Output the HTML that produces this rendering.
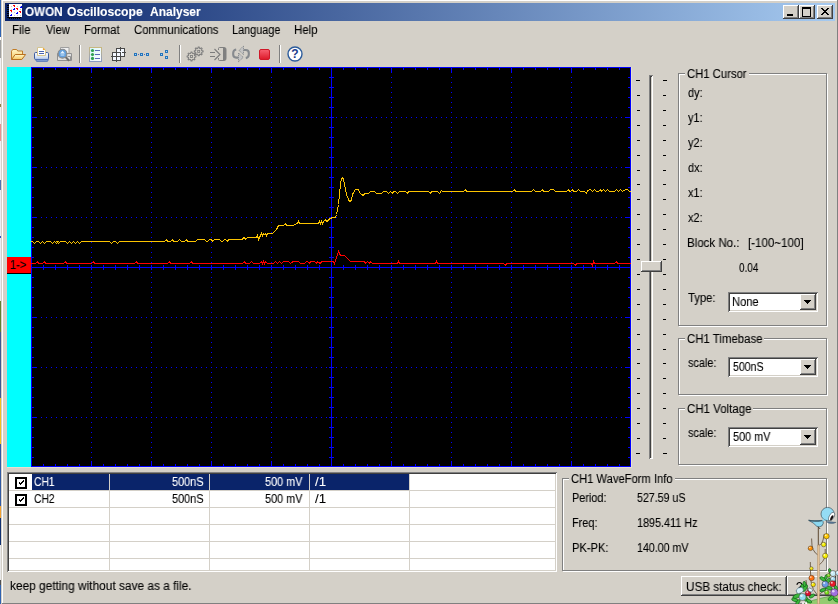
<!DOCTYPE html>
<html><head><meta charset="utf-8"><title>OWON Oscilloscope Analyser</title>
<style>
html,body{margin:0;padding:0;}
body{width:838px;height:604px;overflow:hidden;background:#d4d0c8;position:relative;font-family:"Liberation Sans",sans-serif;font-size:12px;color:#000;}
.a{position:absolute;}
.t{position:absolute;white-space:pre;line-height:14px;height:14px;transform-origin:0 0;will-change:transform;-webkit-text-stroke:0.1px currentColor;}
.gb{position:absolute;border:1px solid #808080;box-shadow:1px 1px 0 #fff, inset 1px 1px 0 #fff;}
.gl{position:absolute;background:#d4d0c8;white-space:nowrap;line-height:14px;height:14px;padding:0 1px;letter-spacing:-0.2px;}
.btn{position:absolute;background:#d4d0c8;box-shadow:inset -1px -1px 0 #404040, inset 1px 1px 0 #fff, inset -2px -2px 0 #808080, inset 2px 2px 0 #d4d0c8;}
.sunk{position:absolute;background:#fff;box-shadow:inset 1px 1px 0 #808080, inset -1px -1px 0 #fff, inset 2px 2px 0 #404040, inset -2px -2px 0 #d4d0c8;}
.sep{position:absolute;width:1px;height:18px;top:45px;background:#808080;box-shadow:1px 0 0 #fff;}
svg{position:absolute;overflow:visible;}
</style></head><body>
<div class="a" style="left:0;top:0;width:1px;height:604px;background:linear-gradient(180deg,#2f62b0 0px,#2f62b0 37px,#ffffff 37px,#ffffff 40px,#a0a0a0 40px,#a0a0a0 58px,#f0f0f4 58px,#f0f0f4 104px,#908040 104px,#908040 107px,#f0f0f4 107px,#f0f0f4 124px,#e89090 124px,#e89090 141px,#f0f0f4 141px,#f0f0f4 180px,#5070b0 180px,#5070b0 190px,#e8ecf4 190px,#e8ecf4 236px,#3050c0 236px,#3050c0 238px,#e8ecf4 238px,#e8ecf4 301px,#608030 301px,#608030 332px,#405890 332px,#405890 398px,#f0c020 398px,#f0c020 444px,#3058a0 444px,#3058a0 506px,#f0a030 506px,#f0a030 518px,#103070 518px,#103070 545px,#e8e8e8 545px,#e8e8e8 580px,#505050 580px,#505050 585px,#2f62b0 585px,#2f62b0 604px)"></div><div class="a" style="left:2px;top:0;width:835px;height:1px;background:#fff"></div><div class="a" style="left:2px;top:0;width:1px;height:603px;background:#fff"></div><div class="a" style="left:837px;top:0;width:1px;height:604px;background:#808080"></div><div class="a" style="left:2px;top:603px;width:836px;height:1px;background:#808080"></div><div class="a" style="left:5px;top:3px;width:830px;height:18px;background:linear-gradient(90deg,#0a246a,#a6caf0)"></div><svg style="left:7px;top:4px" width="16" height="15" viewBox="0 0 16 15" shape-rendering="crispEdges"><rect x="2" y="0" width="13" height="13" fill="#fff"/><g fill="#c4c8cc"><rect x="4" y="2" width="1" height="1"/><rect x="4" y="5" width="1" height="1"/><rect x="4" y="8" width="1" height="1"/><rect x="4" y="11" width="1" height="1"/><rect x="7" y="2" width="1" height="1"/><rect x="7" y="5" width="1" height="1"/><rect x="7" y="8" width="1" height="1"/><rect x="7" y="11" width="1" height="1"/><rect x="10" y="2" width="1" height="1"/><rect x="10" y="5" width="1" height="1"/><rect x="10" y="8" width="1" height="1"/><rect x="10" y="11" width="1" height="1"/><rect x="13" y="2" width="1" height="1"/><rect x="13" y="5" width="1" height="1"/><rect x="13" y="8" width="1" height="1"/><rect x="13" y="11" width="1" height="1"/></g><g fill="#f00"><rect x="6" y="1" width="2" height="1"/><rect x="7" y="2" width="1" height="1"/><rect x="9" y="4" width="2" height="1"/><rect x="10" y="5" width="1" height="1"/><rect x="3" y="6" width="2" height="1"/><rect x="4" y="7" width="1" height="1"/><rect x="12" y="7" width="2" height="1"/><rect x="13" y="8" width="1" height="1"/></g><g fill="#00f"><rect x="13" y="3" width="2" height="1"/><rect x="14" y="2" width="1" height="1"/><rect x="6" y="5" width="2" height="1"/><rect x="7" y="4" width="1" height="1"/><rect x="9" y="9" width="2" height="1"/><rect x="10" y="8" width="1" height="1"/><rect x="3" y="11" width="2" height="1"/><rect x="4" y="10" width="1" height="1"/></g><g fill="#000"><rect x="0" y="1" width="2" height="1"/><rect x="0" y="3" width="2" height="1"/><rect x="0" y="5" width="2" height="1"/><rect x="0" y="7" width="2" height="1"/><rect x="0" y="9" width="2" height="1"/><rect x="0" y="11" width="2" height="1"/><rect x="0" y="13" width="2" height="1"/><rect x="2" y="13" width="1" height="2"/><rect x="4" y="13" width="1" height="2"/><rect x="6" y="13" width="1" height="2"/><rect x="8" y="13" width="1" height="2"/><rect x="10" y="13" width="1" height="2"/><rect x="12" y="13" width="1" height="2"/><rect x="2" y="13" width="12" height="1"/></g></svg><div class="btn" style="left:783px;top:5px;width:16px;height:14px"><div class="a" style="left:4px;top:9px;width:6px;height:2px;background:#000"></div></div><div class="btn" style="left:799px;top:5px;width:16px;height:14px"><div class="a" style="left:3px;top:2px;width:7px;height:7px;border:1px solid #000;border-top-width:2px"></div></div><div class="btn" style="left:817px;top:5px;width:16px;height:14px"><svg style="left:4px;top:3px" width="8" height="7" viewBox="0 0 8 7" shape-rendering="crispEdges"><path d="M0 0h2v1h1v1h2v-1h1v-1h2v1h-1v1h-1v1h-1v1h1v1h1v1h1v1h-2v-1h-1v-1h-2v1h-1v1h-2v-1h1v-1h1v-1h1v-1h-1v-1h-1v-1h-1z" fill="#000"/></svg></div><div class="sep" style="left:79px"></div>
<div class="sep" style="left:179px"></div>
<div class="sep" style="left:279px"></div>
<svg style="left:10px;top:46px" width="18" height="16" viewBox="0 0 18 16">
<defs><linearGradient id="fg" x1="0" y1="0" x2="0" y2="1"><stop offset="0" stop-color="#fff6c8"/><stop offset="1" stop-color="#f6c860"/></linearGradient></defs>
<path d="M1.5 13.5V5.2l1.2-1.7h4l1 1.5h4.8v3.5" fill="url(#fg)" stroke="#c07c28" stroke-width="1" stroke-linejoin="round"/>
<path d="M1.6 13.5L5.2 8.5h10.4l-3.8 5z" fill="url(#fg)" stroke="#b87020" stroke-width="1" stroke-linejoin="round"/>
</svg>
<svg style="left:33px;top:46px" width="18" height="17" viewBox="0 0 18 17">
<defs><linearGradient id="pg" x1="0" y1="0" x2="0" y2="1"><stop offset="0" stop-color="#fafcff"/><stop offset="0.65" stop-color="#d4e0f4"/><stop offset="1" stop-color="#a4bce4"/></linearGradient></defs>
<path d="M1.5 7.7q0-1.2 1.2-1.2h11.6q1.2 0 1.2 1.2v4.6q0 1.2-1.2 1.2h-11.6q-1.2 0-1.2-1.2z" fill="url(#pg)" stroke="#3c5ca0" stroke-width="1"/>
<path d="M2.6 13.5h12.8l-0.9 1.8h-11z" fill="#88a4d8" stroke="#4a6cb4" stroke-width="0.9"/>
<path d="M4.5 9.5v-8h5.3l2.7 2.5v5.5z" fill="#fff" stroke="#d4c490" stroke-width="1"/>
<path d="M9.9 1.6l2.5 2.3h-2.5z" fill="#f0a830"/>
<path d="M6 5.5h5M6 7.5h5" stroke="#4864b0" stroke-width="1"/>
</svg>
<svg style="left:56px;top:46px" width="18" height="17" viewBox="0 0 18 17">
<path d="M4.5 7v-5.5h8.5v6" fill="#f0f0f0" stroke="#a0a0a0" stroke-width="1"/>
<path d="M1.5 7.5h14v7h-14z" fill="#e0e0e0" stroke="#909090" stroke-width="1"/>
<path d="M11.5 10.5h3v3.5" fill="none" stroke="#909090"/>
<circle cx="6.5" cy="7.7" r="4.4" fill="#64a0dc" stroke="#888" stroke-width="1.1"/>
<path d="M6.5 4.8l2.4 2.6h-4.8z" fill="#e8f4ff"/><path d="M4.6 9h3.8" stroke="#d0e8ff" stroke-width="1"/>
<path d="M9.6 11l3.6 3.8" stroke="#707070" stroke-width="2"/>
</svg>
<svg style="left:89px;top:47px" width="13" height="15" viewBox="0 0 13 15">
<defs><linearGradient id="lb" x1="0" y1="0" x2="0" y2="1"><stop offset="0" stop-color="#c8b880"/><stop offset="1" stop-color="#8c9cc4"/></linearGradient>
<linearGradient id="lf" x1="0" y1="0" x2="1" y2="1"><stop offset="0" stop-color="#d8f4fc"/><stop offset="1" stop-color="#fff"/></linearGradient></defs>
<rect x="0.5" y="0.5" width="12" height="14" fill="url(#lf)" stroke="url(#lb)"/>
<g fill="#30a050"><circle cx="3.5" cy="3.5" r="1.6"/><circle cx="3.5" cy="7.5" r="1.6"/><circle cx="3.5" cy="11.4" r="1.6"/></g>
<g stroke="#5868b8" stroke-width="1"><path d="M6 3.5h5M6 7.5h5M6 11.5h5"/></g>
</svg>
<svg style="left:111px;top:47px" width="16" height="16" viewBox="0 0 16 16" shape-rendering="crispEdges">
<rect x="5.5" y="1.5" width="8" height="8" fill="#f4f8ff" stroke="#484848"/>
<rect x="1.5" y="5.5" width="8" height="8" fill="#f4f8ff" stroke="#484848"/>
<path d="M5.5 4v11M0 9.5h11M9.5 0v4M11 5.5h4" stroke="#484848" fill="none"/>
</svg>
<svg style="left:134px;top:50px" width="16" height="10" viewBox="0 0 16 10" shape-rendering="crispEdges"><rect x="0" y="3" width="3" height="3" fill="#2474bc"/><rect x="1" y="4" width="1" height="1" fill="#a8d4f4"/><rect x="6" y="3" width="3" height="3" fill="#2474bc"/><rect x="7" y="4" width="1" height="1" fill="#a8d4f4"/><rect x="12" y="3" width="3" height="3" fill="#2474bc"/><rect x="13" y="4" width="1" height="1" fill="#a8d4f4"/><rect x="4" y="4" width="1" height="1" fill="#4868c0"/><rect x="10" y="4" width="1" height="1" fill="#4868c0"/></svg>
<svg style="left:160px;top:50px" width="8" height="10" viewBox="0 0 8 10" shape-rendering="crispEdges"><rect x="0" y="3" width="3" height="3" fill="#2474bc"/><rect x="1" y="4" width="1" height="1" fill="#a8d4f4"/><rect x="5" y="0" width="3" height="3" fill="#2474bc"/><rect x="6" y="1" width="1" height="1" fill="#a8d4f4"/><rect x="5" y="6" width="3" height="3" fill="#2474bc"/><rect x="6" y="7" width="1" height="1" fill="#a8d4f4"/></svg>
<svg style="left:186px;top:46px" width="18" height="17" viewBox="0 0 18 17"><polygon points="9.88,10.07 9.88,10.93 8.56,11.43 8.32,12.01 8.90,13.29 8.29,13.90 7.01,13.32 6.43,13.56 5.93,14.88 5.07,14.88 4.57,13.56 3.99,13.32 2.71,13.90 2.10,13.29 2.68,12.01 2.44,11.43 1.12,10.93 1.12,10.07 2.44,9.57 2.68,8.99 2.10,7.71 2.71,7.10 3.99,7.68 4.57,7.44 5.07,6.12 5.93,6.12 6.43,7.44 7.01,7.68 8.29,7.10 8.90,7.71 8.32,8.99 8.56,9.57" fill="none" stroke="#808080" stroke-width="1.1"/><rect x="4.5" y="9.5" width="2" height="2" fill="none" stroke="#808080" stroke-width="0.9"/><polygon points="17.08,4.97 17.08,5.83 15.76,6.33 15.52,6.91 16.10,8.19 15.49,8.80 14.21,8.22 13.63,8.46 13.13,9.78 12.27,9.78 11.77,8.46 11.19,8.22 9.91,8.80 9.30,8.19 9.88,6.91 9.64,6.33 8.32,5.83 8.32,4.97 9.64,4.47 9.88,3.89 9.30,2.61 9.91,2.00 11.19,2.58 11.77,2.34 12.27,1.02 13.13,1.02 13.63,2.34 14.21,2.58 15.49,2.00 16.10,2.61 15.52,3.89 15.76,4.47" fill="none" stroke="#808080" stroke-width="1.1"/><rect x="11.7" y="4.4" width="2" height="2" fill="none" stroke="#808080" stroke-width="0.9"/></svg>
<svg style="left:209px;top:46px" width="19" height="16" viewBox="0 0 19 16">
<path d="M1 6.5h5M1 10.5h5M5.5 3l5.5 5.5l-5.5 5.5" fill="none" stroke="#7c7c7c" stroke-width="1.1"/>
<path d="M9.5 4v-1.5q0-1 1-1h5q1.5 0 1.5 2v9q0 2-1.5 2h-5q-1 0-1-1v-1.5" fill="none" stroke="#808080" stroke-width="1"/>
<path d="M14 1.5h1.5q1.5 0 1.5 2v9q0 2-1.5 2h-1.5z" fill="#808080"/>
</svg>
<svg style="left:228px;top:42px" width="28" height="24" viewBox="228 42 28 24">
<path d="M243.5 50h2.3q3 0 3 3v1.5q0 3-3 3.6" fill="none" stroke="#868a8e" stroke-width="2.1"/>
<path d="M238.5 57.6h-2.3q-3 0-3-3v-1.5q0-3 3-3.6" fill="none" stroke="#868a8e" stroke-width="2.1"/>
<path d="M239 50.4l4.5-4.4v8.6z" fill="#c4c4c4" stroke="#808488" stroke-width="0.9" stroke-dasharray="1.2 0.8"/>
<path d="M243.2 57.4l-4.7 4.4v-8.8z" fill="#c4c4c4" stroke="#808488" stroke-width="0.9" stroke-dasharray="1.2 0.8"/>
</svg>
<svg style="left:259px;top:49px" width="11" height="11" viewBox="0 0 11 11">
<defs><linearGradient id="sg" x1="0" y1="0" x2="0" y2="1"><stop offset="0" stop-color="#f86070"/><stop offset="1" stop-color="#dc1828"/></linearGradient></defs>
<rect x="0.5" y="0.5" width="10" height="10" rx="1.5" fill="url(#sg)" stroke="#d01828"/></svg>
<svg style="left:287px;top:46px" width="16" height="16" viewBox="0 0 16 16">
<circle cx="8" cy="8" r="7" fill="#fff" stroke="#2c5c9c" stroke-width="1.4"/>
<text x="8" y="12.2" text-anchor="middle" font-family="Liberation Sans, sans-serif" font-weight="bold" font-size="12" fill="#1c3c8c">?</text></svg><div class="a" style="left:7px;top:467px;width:625px;height:1px;background:#e6e0d0"></div><div class="a" style="left:631px;top:67px;width:1px;height:400px;background:#e6e0d0"></div>
<div class="a" style="left:7px;top:67px;width:24px;height:400px;background:#00ffff"></div>
<div class="a" style="left:7px;top:257px;width:24px;height:16px;background:#ff0000"></div>
<div class="a" style="left:7px;top:273px;width:24px;height:1px;background:#000"></div>
<svg style="left:31px;top:67px" width="600" height="400" viewBox="0 0 600 400" shape-rendering="crispEdges"><defs><pattern id="dh" width="5" height="1" patternUnits="userSpaceOnUse"><rect width="1" height="1" fill="#00f"/></pattern><pattern id="dv" width="1" height="5" patternUnits="userSpaceOnUse"><rect width="1" height="1" fill="#00f"/></pattern></defs><rect width="600" height="400" fill="#000"/><rect x="0" y="50" width="600" height="1" fill="url(#dh)"/><rect x="0" y="100" width="600" height="1" fill="url(#dh)"/><rect x="0" y="150" width="600" height="1" fill="url(#dh)"/><rect x="0" y="250" width="600" height="1" fill="url(#dh)"/><rect x="0" y="300" width="600" height="1" fill="url(#dh)"/><rect x="0" y="350" width="600" height="1" fill="url(#dh)"/><rect x="60" y="0" width="1" height="400" fill="url(#dv)"/><rect x="120" y="0" width="1" height="400" fill="url(#dv)"/><rect x="180" y="0" width="1" height="400" fill="url(#dv)"/><rect x="240" y="0" width="1" height="400" fill="url(#dv)"/><rect x="360" y="0" width="1" height="400" fill="url(#dv)"/><rect x="420" y="0" width="1" height="400" fill="url(#dv)"/><rect x="480" y="0" width="1" height="400" fill="url(#dv)"/><rect x="540" y="0" width="1" height="400" fill="url(#dv)"/><path d="M0.5 0.5h599v399h-599z" fill="none" stroke="#00f"/><path d="M1 10.5h2M597 10.5h2M1 20.5h2M597 20.5h2M1 30.5h2M597 30.5h2M1 40.5h2M597 40.5h2M1 50.5h5M594 50.5h5M1 60.5h2M597 60.5h2M1 70.5h2M597 70.5h2M1 80.5h2M597 80.5h2M1 90.5h2M597 90.5h2M1 100.5h5M594 100.5h5M1 110.5h2M597 110.5h2M1 120.5h2M597 120.5h2M1 130.5h2M597 130.5h2M1 140.5h2M597 140.5h2M1 150.5h5M594 150.5h5M1 160.5h2M597 160.5h2M1 170.5h2M597 170.5h2M1 180.5h2M597 180.5h2M1 190.5h2M597 190.5h2M1 200.5h5M594 200.5h5M1 210.5h2M597 210.5h2M1 220.5h2M597 220.5h2M1 230.5h2M597 230.5h2M1 240.5h2M597 240.5h2M1 250.5h5M594 250.5h5M1 260.5h2M597 260.5h2M1 270.5h2M597 270.5h2M1 280.5h2M597 280.5h2M1 290.5h2M597 290.5h2M1 300.5h5M594 300.5h5M1 310.5h2M597 310.5h2M1 320.5h2M597 320.5h2M1 330.5h2M597 330.5h2M1 340.5h2M597 340.5h2M1 350.5h5M594 350.5h5M1 360.5h2M597 360.5h2M1 370.5h2M597 370.5h2M1 380.5h2M597 380.5h2M1 390.5h2M597 390.5h2M12.5 1v2M12.5 397v2M24.5 1v2M24.5 397v2M36.5 1v2M36.5 397v2M48.5 1v2M48.5 397v2M60.5 1v5M60.5 394v5M72.5 1v2M72.5 397v2M84.5 1v2M84.5 397v2M96.5 1v2M96.5 397v2M108.5 1v2M108.5 397v2M120.5 1v5M120.5 394v5M132.5 1v2M132.5 397v2M144.5 1v2M144.5 397v2M156.5 1v2M156.5 397v2M168.5 1v2M168.5 397v2M180.5 1v5M180.5 394v5M192.5 1v2M192.5 397v2M204.5 1v2M204.5 397v2M216.5 1v2M216.5 397v2M228.5 1v2M228.5 397v2M240.5 1v5M240.5 394v5M252.5 1v2M252.5 397v2M264.5 1v2M264.5 397v2M276.5 1v2M276.5 397v2M288.5 1v2M288.5 397v2M300.5 1v5M300.5 394v5M312.5 1v2M312.5 397v2M324.5 1v2M324.5 397v2M336.5 1v2M336.5 397v2M348.5 1v2M348.5 397v2M360.5 1v5M360.5 394v5M372.5 1v2M372.5 397v2M384.5 1v2M384.5 397v2M396.5 1v2M396.5 397v2M408.5 1v2M408.5 397v2M420.5 1v5M420.5 394v5M432.5 1v2M432.5 397v2M444.5 1v2M444.5 397v2M456.5 1v2M456.5 397v2M468.5 1v2M468.5 397v2M480.5 1v5M480.5 394v5M492.5 1v2M492.5 397v2M504.5 1v2M504.5 397v2M516.5 1v2M516.5 397v2M528.5 1v2M528.5 397v2M540.5 1v5M540.5 394v5M552.5 1v2M552.5 397v2M564.5 1v2M564.5 397v2M576.5 1v2M576.5 397v2M588.5 1v2M588.5 397v2M0 200.5h600M300.5 0v400M298 10.5h5M298 20.5h5M298 30.5h5M298 40.5h5M298 50.5h5M298 60.5h5M298 70.5h5M298 80.5h5M298 90.5h5M298 100.5h5M298 110.5h5M298 120.5h5M298 130.5h5M298 140.5h5M298 150.5h5M298 160.5h5M298 170.5h5M298 180.5h5M298 190.5h5M298 200.5h5M298 210.5h5M298 220.5h5M298 230.5h5M298 240.5h5M298 250.5h5M298 260.5h5M298 270.5h5M298 280.5h5M298 290.5h5M298 300.5h5M298 310.5h5M298 320.5h5M298 330.5h5M298 340.5h5M298 350.5h5M298 360.5h5M298 370.5h5M298 380.5h5M298 390.5h5M12.5 198v5M24.5 198v5M36.5 198v5M48.5 198v5M60.5 198v5M72.5 198v5M84.5 198v5M96.5 198v5M108.5 198v5M120.5 198v5M132.5 198v5M144.5 198v5M156.5 198v5M168.5 198v5M180.5 198v5M192.5 198v5M204.5 198v5M216.5 198v5M228.5 198v5M240.5 198v5M252.5 198v5M264.5 198v5M276.5 198v5M288.5 198v5M300.5 198v5M312.5 198v5M324.5 198v5M336.5 198v5M348.5 198v5M360.5 198v5M372.5 198v5M384.5 198v5M396.5 198v5M408.5 198v5M420.5 198v5M432.5 198v5M444.5 198v5M456.5 198v5M468.5 198v5M480.5 198v5M492.5 198v5M504.5 198v5M516.5 198v5M528.5 198v5M540.5 198v5M552.5 198v5M564.5 198v5M576.5 198v5M588.5 198v5" stroke="#00f" fill="none"/><polyline points="0.5,174.5 1.5,174.5 3.5,176.5 5.5,174.5 7.5,174.5 9.5,176.5 11.5,174.5 11.5,174.5 13.5,176.5 15.5,174.5 19.5,174.5 21.5,176.5 23.5,174.5 23.5,174.5 25.5,176.5 27.5,174.5 25.5,174.5 27.5,176.5 29.5,174.5 34.5,174.5 36.5,176.5 38.5,174.5 38.5,174.5 40.5,176.5 42.5,174.5 42.5,174.5 44.5,176.5 46.5,174.5 46.5,174.5 48.5,176.5 50.5,174.5 78.5,174.5 80.5,176.5 82.5,174.5 84.5,174.5 86.5,176.5 88.5,174.5 133.5,174.5 135.5,172.5 136.5,174.5 139.5,174.5 141.5,172.5 142.5,174.5 146.5,174.5 148.5,172.5 150.5,174.5 153.5,174.5 155.5,172.5 156.5,174.5 164.5,174.5 166.5,172.5 173.5,172.5 175.5,174.5 176.5,174.5 178.5,172.5 180.5,172.5 181.5,174.5 183.5,172.5 188.5,172.5 190.5,174.5 191.5,174.5 193.5,172.5 194.5,172.5 196.5,174.5 197.5,172.5 211.5,172.5 212.5,170.5 213.5,170.5 214.5,172.5 216.5,170.5 225.5,170.5 226.5,168.5 227.5,172.5 229.5,168.5 230.5,166.5 231.5,168.5 232.5,166.5 233.5,167.5 234.5,166.5 235.5,168.5 236.5,166.5 241.5,166.5 243.5,164.5 244.5,163.5 245.5,162.5 247.5,158.5 252.5,158.5 254.5,156.5 255.5,158.5 262.5,158.5 265.5,156.5 266.5,156.5 267.5,154.5 268.5,156.5 287.5,156.5 288.5,154.5 289.5,156.5 290.5,154.5 291.5,156.5 292.5,154.5 294.5,152.5 295.5,154.5 296.5,154.5 297.5,152.5 299.5,151.5 301.5,150.5 304.5,150.5 305.5,147.5 306.5,143.5 307.5,137.5 308.5,127.5 309.5,117.5 310.5,111.5 311.5,110.5 312.5,112.5 313.5,117.5 314.5,122.5 315.5,127.5 317.5,132.5 318.5,134.5 319.5,134.5 320.5,132.5 321.5,127.5 322.5,125.5 324.5,122.5 327.5,122.5 328.5,125.5 330.5,127.5 332.5,128.5 333.5,126.5 337.5,126.5 339.5,124.5 343.5,124.5 345.5,126.5 350.5,126.5 352.5,124.5 355.5,124.5 357.5,126.5 359.5,124.5 361.5,126.5 362.5,124.5 364.5,124.5 366.5,126.5 368.5,124.5 374.5,124.5 376.5,126.5 377.5,124.5 397.5,124.5 399.5,126.5 400.5,124.5 406.5,124.5 408.5,126.5 410.5,123.5 411.5,124.5 432.5,124.5 434.5,122.5 435.5,124.5 481.5,124.5 483.5,122.5 484.5,124.5 500.5,124.5 502.5,122.5 504.5,124.5 509.5,124.5 511.5,122.5 512.5,124.5 517.5,124.5 519.5,122.5 522.5,122.5 524.5,124.5 535.5,124.5 537.5,122.5 538.5,124.5 539.5,124.5 541.5,122.5 542.5,124.5 545.5,124.5 547.5,122.5 549.5,124.5 553.5,124.5 555.5,126.5 556.5,123.5 559.5,122.5 561.5,124.5 563.5,122.5 565.5,124.5 567.5,124.5 569.5,122.5 570.5,124.5 572.5,122.5 574.5,124.5 576.5,122.5 578.5,124.5 583.5,124.5 585.5,122.5 587.5,124.5 589.5,122.5 591.5,124.5 594.5,122.5 596.5,122.5 598.5,124.5 599.5,124.5" fill="none" stroke="#fcc400" stroke-width="1" stroke-linecap="square" shape-rendering="crispEdges"/><polyline points="0.5,196.5 4.5,196.5 6.5,194.5 7.5,196.5 11.5,196.5 13.5,194.5 14.5,196.5 32.5,196.5 34.5,194.5 35.5,196.5 60.5,196.5 62.5,194.5 63.5,196.5 103.5,196.5 105.5,194.5 106.5,196.5 136.5,196.5 138.5,194.5 139.5,196.5 158.5,196.5 160.5,194.5 161.5,196.5 211.5,196.5 213.5,194.5 214.5,196.5 218.5,196.5 220.5,194.5 222.5,196.5 228.5,196.5 230.5,194.5 231.5,196.5 232.5,194.5 233.5,196.5 234.5,194.5 236.5,196.5 242.5,196.5 244.5,194.5 246.5,196.5 248.5,194.5 250.5,196.5 252.5,194.5 257.5,194.5 259.5,196.5 260.5,195.5 262.5,194.5 267.5,194.5 269.5,196.5 273.5,196.5 275.5,194.5 276.5,194.5 278.5,196.5 279.5,194.5 283.5,194.5 285.5,196.5 286.5,194.5 287.5,195.5 289.5,196.5 290.5,194.5 302.5,194.5 303.5,196.5 304.5,193.5 306.5,187.5 307.5,184.5 308.5,186.5 309.5,188.5 313.5,188.5 316.5,191.5 319.5,194.5 333.5,194.5 334.5,196.5 336.5,194.5 338.5,196.5 339.5,194.5 341.5,196.5 366.5,196.5 367.5,194.5 368.5,196.5 404.5,196.5 405.5,194.5 406.5,196.5 472.5,196.5 474.5,198.5 475.5,196.5 542.5,196.5 544.5,198.5 545.5,196.5 560.5,196.5 561.5,198.5 562.5,194.5 563.5,196.5 583.5,196.5 585.5,194.5 586.5,196.5 599.5,196.5" fill="none" stroke="#ff0000" stroke-width="1" stroke-linecap="square" shape-rendering="crispEdges"/></svg><div class="a" style="left:649px;top:75px;width:4px;height:384px;box-shadow:inset 1px 1px 0 #808080, inset -1px -1px 0 #fff, inset 2px 2px 0 #404040;background:#d4d0c8"></div>
<svg style="left:631px;top:75px" width="40" height="384" viewBox="0 0 40 384" shape-rendering="crispEdges"><path d="M5 5.5h4M32 5.5h4M6 20.5h3M32 20.5h3M6 35.5h3M32 35.5h3M6 50.5h3M32 50.5h3M6 65.5h3M32 65.5h3M6 80.5h3M32 80.5h3M6 95.5h3M32 95.5h3M6 109.5h3M32 109.5h3M6 124.5h3M32 124.5h3M6 139.5h3M32 139.5h3M6 154.5h3M32 154.5h3M6 169.5h3M32 169.5h3M6 184.5h3M32 184.5h3M6 199.5h3M32 199.5h3M6 214.5h3M32 214.5h3M6 229.5h3M32 229.5h3M6 244.5h3M32 244.5h3M6 259.5h3M32 259.5h3M6 274.5h3M32 274.5h3M6 288.5h3M32 288.5h3M6 303.5h3M32 303.5h3M6 318.5h3M32 318.5h3M6 333.5h3M32 333.5h3M6 348.5h3M32 348.5h3M6 363.5h3M32 363.5h3M5 378.5h4M32 378.5h4" stroke="#000" fill="none"/></svg>
<div class="btn" style="left:641px;top:261px;width:21px;height:11px"></div>
<div class="gb" style="left:678px;top:73px;width:147px;height:251px"></div>
<div class="gb" style="left:678px;top:338px;width:147px;height:55px"></div>
<div class="gb" style="left:678px;top:408px;width:147px;height:55px"></div>
<div class="gb" style="left:562px;top:478px;width:263px;height:91px"></div>
<div class="a" style="left:685px;top:72px;width:64px;height:3px;background:#d4d0c8"></div>
<div class="t" style="left:686.85px;top:67px;transform:scaleX(0.9402);">CH1 Cursor</div>
<div class="a" style="left:685px;top:337px;width:79px;height:3px;background:#d4d0c8"></div>
<div class="t" style="left:686.84px;top:332px;transform:scaleX(0.9516);">CH1 Timebase</div>
<div class="a" style="left:685px;top:407px;width:68px;height:3px;background:#d4d0c8"></div>
<div class="t" style="left:686.84px;top:402px;transform:scaleX(0.9578);">CH1 Voltage</div>
<div class="a" style="left:569px;top:477px;width:106px;height:3px;background:#d4d0c8"></div>
<div class="t" style="left:570.86px;top:472px;transform:scaleX(0.9320);">CH1 WaveForm Info</div>
<div class="sunk" style="left:728px;top:292px;width:90px;height:20px"></div>
<div class="btn" style="left:800px;top:294px;width:16px;height:16px"><svg style="left:4px;top:6px" width="7" height="4" viewBox="0 0 7 4" shape-rendering="crispEdges"><path d="M0 0h7v1h-1v1h-1v1h-1v1h-1v-1h-1v-1h-1v-1h-1z" fill="#000"/></svg></div>
<div class="sunk" style="left:728px;top:357px;width:90px;height:20px"></div>
<div class="btn" style="left:800px;top:359px;width:16px;height:16px"><svg style="left:4px;top:6px" width="7" height="4" viewBox="0 0 7 4" shape-rendering="crispEdges"><path d="M0 0h7v1h-1v1h-1v1h-1v1h-1v-1h-1v-1h-1v-1h-1z" fill="#000"/></svg></div>
<div class="sunk" style="left:728px;top:427px;width:90px;height:20px"></div>
<div class="btn" style="left:800px;top:429px;width:16px;height:16px"><svg style="left:4px;top:6px" width="7" height="4" viewBox="0 0 7 4" shape-rendering="crispEdges"><path d="M0 0h7v1h-1v1h-1v1h-1v1h-1v-1h-1v-1h-1v-1h-1z" fill="#000"/></svg></div>
<div class="sunk" style="left:7px;top:472px;width:550px;height:100px"></div>
<div class="a" style="left:9px;top:490px;width:546px;height:1px;background:#d4d0c8"></div><div class="a" style="left:9px;top:507px;width:546px;height:1px;background:#d4d0c8"></div><div class="a" style="left:9px;top:524px;width:546px;height:1px;background:#d4d0c8"></div><div class="a" style="left:9px;top:541px;width:546px;height:1px;background:#d4d0c8"></div><div class="a" style="left:9px;top:558px;width:546px;height:1px;background:#d4d0c8"></div><div class="a" style="left:109px;top:474px;width:1px;height:96px;background:#d4d0c8"></div><div class="a" style="left:209px;top:474px;width:1px;height:96px;background:#d4d0c8"></div><div class="a" style="left:309px;top:474px;width:1px;height:96px;background:#d4d0c8"></div><div class="a" style="left:409px;top:474px;width:1px;height:96px;background:#d4d0c8"></div>
<div class="a" style="left:32px;top:474px;width:77px;height:16px;background:#0a246a"></div>
<div class="a" style="left:110px;top:474px;width:99px;height:16px;background:#0a246a"></div>
<div class="a" style="left:210px;top:474px;width:99px;height:16px;background:#0a246a"></div>
<div class="a" style="left:310px;top:474px;width:99px;height:16px;background:#0a246a"></div>
<div class="a" style="left:15px;top:477px;width:8px;height:8px;border:2px solid #000;background:#fff"><svg style="left:0;top:0" width="8" height="8" viewBox="0 0 8 8" shape-rendering="crispEdges"><path d="M2 3h1v1h1v-1h1v-1h1v-1h1v2h-1v1h-1v1h-1v1h-1v-1h-1z" fill="#000"/></svg></div>
<div class="a" style="left:15px;top:494px;width:8px;height:8px;border:2px solid #000;background:#fff"><svg style="left:0;top:0" width="8" height="8" viewBox="0 0 8 8" shape-rendering="crispEdges"><path d="M2 3h1v1h1v-1h1v-1h1v-1h1v2h-1v1h-1v1h-1v1h-1v-1h-1z" fill="#000"/></svg></div>
<div class="btn" style="left:681px;top:576px;width:106px;height:20px"></div>
<div class="btn" style="left:787px;top:576px;width:49px;height:20px"></div>
<div class="t" style="left:24.83px;top:5px;transform:scaleX(0.9718);color:#fff;font-weight:bold;">OWON</div>
<div class="t" style="left:66.79px;top:5px;transform:scaleX(1.0130);color:#fff;font-weight:bold;">Oscilloscope</div>
<div class="t" style="left:149.80px;top:5px;transform:scaleX(0.9994);color:#fff;font-weight:bold;">Analyser</div>
<div class="t" style="left:12.14px;top:23px;transform:scaleX(0.9581);">File</div>
<div class="t" style="left:45.88px;top:23px;transform:scaleX(0.9156);">View</div>
<div class="t" style="left:84.16px;top:23px;transform:scaleX(0.9344);">Format</div>
<div class="t" style="left:133.85px;top:23px;transform:scaleX(0.9457);">Communications</div>
<div class="t" style="left:232.18px;top:23px;transform:scaleX(0.9075);">Language</div>
<div class="t" style="left:294.14px;top:23px;transform:scaleX(0.9549);">Help</div>
<div class="t" style="left:10.16px;top:258px;transform:scaleX(0.9324);">1-&gt;</div>
<div class="t" style="left:687.88px;top:86px;transform:scaleX(0.9064);">dy:</div>
<div class="t" style="left:687.88px;top:111px;transform:scaleX(0.9064);">y1:</div>
<div class="t" style="left:687.88px;top:136px;transform:scaleX(0.9064);">y2:</div>
<div class="t" style="left:687.88px;top:161px;transform:scaleX(0.9064);">dx:</div>
<div class="t" style="left:687.88px;top:186px;transform:scaleX(0.9064);">x1:</div>
<div class="t" style="left:687.88px;top:211px;transform:scaleX(0.9064);">x2:</div>
<div class="t" style="left:687.14px;top:236px;transform:scaleX(0.9607);">Block No.:</div>
<div class="t" style="left:748.13px;top:236px;transform:scaleX(0.9629);">[-100~100]</div>
<div class="t" style="left:738.95px;top:261px;transform:scaleX(0.8295);">0.04</div>
<div class="t" style="left:687.86px;top:291px;transform:scaleX(0.9379);">Type:</div>
<div class="t" style="left:732.16px;top:295px;transform:scaleX(0.9290);">None</div>
<div class="t" style="left:687.88px;top:356px;transform:scaleX(0.9084);">scale:</div>
<div class="t" style="left:732.91px;top:360px;transform:scaleX(0.8780);">500nS</div>
<div class="t" style="left:687.88px;top:426px;transform:scaleX(0.9084);">scale:</div>
<div class="t" style="left:732.88px;top:430px;transform:scaleX(0.9080);">500 mV</div>
<div class="t" style="left:33.93px;top:475px;transform:scaleX(0.8556);color:#fff;">CH1</div>
<div class="t" style="left:171.88px;top:475px;transform:scaleX(0.9081);color:#fff;">500nS</div>
<div class="t" style="left:264.88px;top:475px;transform:scaleX(0.9080);color:#fff;">500 mV</div>
<div class="t" style="left:314.70px;top:475px;transform:scaleX(1.1060);color:#fff;">/1</div>
<div class="t" style="left:33.93px;top:492px;transform:scaleX(0.8556);">CH2</div>
<div class="t" style="left:171.88px;top:492px;transform:scaleX(0.9081);">500nS</div>
<div class="t" style="left:264.88px;top:492px;transform:scaleX(0.9080);">500 mV</div>
<div class="t" style="left:314.70px;top:492px;transform:scaleX(1.1060);">/1</div>
<div class="t" style="left:572.18px;top:491px;transform:scaleX(0.9058);">Period:</div>
<div class="t" style="left:636.90px;top:491px;transform:scaleX(0.8856);">527.59 uS</div>
<div class="t" style="left:572.18px;top:516px;transform:scaleX(0.9086);">Freq:</div>
<div class="t" style="left:637.19px;top:516px;transform:scaleX(0.9003);">1895.411 Hz</div>
<div class="t" style="left:572.17px;top:541px;transform:scaleX(0.9269);">PK-PK:</div>
<div class="t" style="left:637.20px;top:541px;transform:scaleX(0.8871);">140.00 mV</div>
<div class="t" style="left:9.81px;top:579px;transform:scaleX(0.9899);">keep getting without save as a file.</div>
<div class="t" style="left:686.12px;top:580px;transform:scaleX(0.9747);">USB status check:</div>
<div class="t" style="left:796px;top:580px">?</div><svg style="left:790px;top:500px" width="48" height="104" viewBox="790 500 48 104"><path d="M804 604q9-4.5 18-6q8-1.5 16-4v10z" fill="#94cc70"/><path d="M804 604q9-4.5 18-6q8-1.5 16-4" fill="none" stroke="#5c9c48" stroke-width="0.7"/><g fill="none" stroke="#5c4830" stroke-width="0.8"><path d="M811.6 538.5q0 8 1.5 11q2 4 4.8 5.5"/><path d="M824.2 534.2q-1 7-2.5 9q-1 1.5-3 2.3"/><path d="M825.2 549v5"/><path d="M824.6 558q-1.5 4-5.5 7"/><path d="M810.3 562q0 10 0.8 20q1 8 7 14"/><path d="M819.5 594q7-3 10-15"/><path d="M806 580q0.5 6 2 11"/><path d="M829 569q0.3 4 0.5 8"/></g><path d="M818.3 526.5v20" stroke="#5c4830" stroke-width="1" fill="none"/><path d="M817.6 545h1.7l0.2 59h-2.1z" fill="#e8c8a0" stroke="#a88860" stroke-width="0.5"/><path d="M818.2 527l2 2" stroke="#403020" stroke-width="0.8"/><ellipse cx="797" cy="596" rx="4.5" ry="2" transform="rotate(-25 797 596)" fill="#3cb83c" stroke="#0c5c14" stroke-width="0.6"/><ellipse cx="803" cy="587.5" rx="3.6" ry="1.7" transform="rotate(70 803 587.5)" fill="#3cb83c" stroke="#0c5c14" stroke-width="0.6"/><ellipse cx="805" cy="588" rx="3.8" ry="1.8" transform="rotate(-60 805 588)" fill="#3cb83c" stroke="#0c5c14" stroke-width="0.6"/><ellipse cx="795" cy="600" rx="3.5" ry="1.6" transform="rotate(20 795 600)" fill="#3cb83c" stroke="#0c5c14" stroke-width="0.6"/><ellipse cx="806" cy="599" rx="3.5" ry="1.8" transform="rotate(60 806 599)" fill="#3cb83c" stroke="#0c5c14" stroke-width="0.6"/><ellipse cx="812" cy="596" rx="3" ry="1.5" transform="rotate(-30 812 596)" fill="#3cb83c" stroke="#0c5c14" stroke-width="0.6"/><ellipse cx="804.5" cy="584" rx="2.8" ry="1.4" transform="rotate(80 804.5 584)" fill="#3cb83c" stroke="#0c5c14" stroke-width="0.6"/><ellipse cx="809" cy="601" rx="3" ry="1.5" transform="rotate(30 809 601)" fill="#3cb83c" stroke="#0c5c14" stroke-width="0.6"/><ellipse cx="798" cy="602" rx="3" ry="1.4" transform="rotate(-50 798 602)" fill="#3cb83c" stroke="#0c5c14" stroke-width="0.6"/><ellipse cx="823" cy="579" rx="3.5" ry="1.7" transform="rotate(30 823 579)" fill="#3cb83c" stroke="#0c5c14" stroke-width="0.6"/><ellipse cx="828" cy="581" rx="3.5" ry="1.7" transform="rotate(-50 828 581)" fill="#3cb83c" stroke="#0c5c14" stroke-width="0.6"/><ellipse cx="829" cy="588" rx="3.5" ry="1.8" transform="rotate(20 829 588)" fill="#3cb83c" stroke="#0c5c14" stroke-width="0.6"/><ellipse cx="823" cy="590" rx="3.2" ry="1.6" transform="rotate(-20 823 590)" fill="#3cb83c" stroke="#0c5c14" stroke-width="0.6"/><ellipse cx="831" cy="598" rx="3.5" ry="1.7" transform="rotate(-40 831 598)" fill="#3cb83c" stroke="#0c5c14" stroke-width="0.6"/><ellipse cx="836" cy="588" rx="3" ry="1.5" transform="rotate(60 836 588)" fill="#3cb83c" stroke="#0c5c14" stroke-width="0.6"/><ellipse cx="836" cy="600" rx="3" ry="1.5" transform="rotate(30 836 600)" fill="#3cb83c" stroke="#0c5c14" stroke-width="0.6"/><ellipse cx="826" cy="577" rx="2.5" ry="1.3" transform="rotate(-70 826 577)" fill="#3cb83c" stroke="#0c5c14" stroke-width="0.6"/><ellipse cx="830" cy="571" rx="2.5" ry="1.2" transform="rotate(70 830 571)" fill="#3cb83c" stroke="#0c5c14" stroke-width="0.6"/><circle cx="826.5" cy="536.2" r="2.7" fill="#ffc800" stroke="#403020" stroke-width="0.5"/><circle cx="825.7" cy="535.3" r="0.9" fill="#fff" fill-opacity="0.7"/><circle cx="823.7" cy="544.5" r="2.3" fill="#f4f000" stroke="#403020" stroke-width="0.5"/><circle cx="823.0" cy="543.7" r="0.8" fill="#fff" fill-opacity="0.7"/><circle cx="810.5" cy="548.3" r="2.3" fill="#ff9000" stroke="#403020" stroke-width="0.5"/><circle cx="809.8" cy="547.5" r="0.8" fill="#fff" fill-opacity="0.7"/><circle cx="825.2" cy="555.8" r="2.6" fill="#f8f000" stroke="#403020" stroke-width="0.5"/><circle cx="824.4" cy="554.9" r="0.9" fill="#fff" fill-opacity="0.7"/><circle cx="811.4" cy="568.5" r="1.7" fill="#f4e800" stroke="#403020" stroke-width="0.5"/><circle cx="810.9" cy="567.9" r="0.6" fill="#fff" fill-opacity="0.7"/><circle cx="811.6" cy="578" r="2.7" fill="#ff7010" stroke="#403020" stroke-width="0.5"/><circle cx="810.8" cy="577.1" r="0.9" fill="#fff" fill-opacity="0.7"/><circle cx="813.2" cy="584.6" r="2.2" fill="#f4e400" stroke="#403020" stroke-width="0.5"/><circle cx="812.5" cy="583.8" r="0.8" fill="#fff" fill-opacity="0.7"/><circle cx="808.1" cy="593.3" r="2.8" fill="#d81030" stroke="#403020" stroke-width="0.5"/><circle cx="807.3" cy="592.3" r="1.0" fill="#fff" fill-opacity="0.7"/><ellipse cx="799.8" cy="590.4" rx="3.8" ry="2.8" transform="rotate(-30 799.8 590.4)" fill="#d8f4fc" stroke="#305060" stroke-width="0.5"/><circle cx="802.5" cy="597" r="3.6" fill="#90dcf0" stroke="#403020" stroke-width="0.5"/><circle cx="801.4" cy="595.7" r="1.3" fill="#fff" fill-opacity="0.7"/><ellipse cx="810.3" cy="590" rx="2.4" ry="1.6" transform="rotate(30 810.3 590)" fill="#e8f8ff" stroke="#305060" stroke-width="0.5"/><circle cx="833" cy="573.5" r="3" fill="#c8ecf8" stroke="#403020" stroke-width="0.5"/><circle cx="832.1" cy="572.5" r="1.0" fill="#fff" fill-opacity="0.7"/><circle cx="828.6" cy="575.4" r="1.8" fill="#80e020" stroke="#403020" stroke-width="0.5"/><circle cx="828.1" cy="574.8" r="0.6" fill="#fff" fill-opacity="0.7"/><circle cx="833" cy="579" r="2.6" fill="#a8dcf4" stroke="#403020" stroke-width="0.5"/><circle cx="832.2" cy="578.1" r="0.9" fill="#fff" fill-opacity="0.7"/><circle cx="825.2" cy="584.2" r="3.2" fill="#6c9ce8" stroke="#403020" stroke-width="0.5"/><circle cx="824.2" cy="583.1" r="1.1" fill="#fff" fill-opacity="0.7"/><circle cx="832.7" cy="583.8" r="3" fill="#e81828" stroke="#403020" stroke-width="0.5"/><circle cx="831.8" cy="582.8" r="1.0" fill="#fff" fill-opacity="0.7"/><circle cx="826.9" cy="592.5" r="2.3" fill="#78e018" stroke="#403020" stroke-width="0.5"/><circle cx="826.2" cy="591.7" r="0.8" fill="#fff" fill-opacity="0.7"/><circle cx="834.4" cy="592.5" r="3.8" fill="#a070e0" stroke="#403020" stroke-width="0.5"/><circle cx="833.3" cy="591.2" r="1.3" fill="#fff" fill-opacity="0.7"/><circle cx="838" cy="573" r="2.5" fill="#b8e4f8" stroke="#403020" stroke-width="0.5"/><circle cx="837.2" cy="572.1" r="0.9" fill="#fff" fill-opacity="0.7"/><path d="M803 601l1 3h-2zM806 601l1.5 3h-2.5z" fill="#fff"/><path d="M808.6 520.3q3 0.8 6 0.4l8.2-0.3q1.5 3-1 5.6q-2.5 1.5-5 0.3q-3-3.5-8.2-6z" fill="#8cd8f0" stroke="#283c48" stroke-width="0.6"/><path d="M808.8 520.4q6 1.4 13 0.2" fill="none" stroke="#385868" stroke-width="1.2"/><circle cx="827.6" cy="514" r="6.6" fill="#94dcf4" stroke="#283c48" stroke-width="0.6"/><path d="M822.6 518q1 2-0.6 3.2l3.5-0.4z" fill="#8cd8f0"/><ellipse cx="831.6" cy="516.5" rx="2.3" ry="4.6" transform="rotate(28 831.6 516.5)" fill="#fff" stroke="#283c48" stroke-width="0.5"/><ellipse cx="831.8" cy="517.8" rx="1.2" ry="2.8" transform="rotate(28 831.8 517.8)" fill="#181010"/><path d="M826.5 521.6q5 0.3 9.6 0.8q-4 2-8 0.6z" fill="#5c7c9c" stroke="#384c60" stroke-width="0.4"/></svg></body></html>
